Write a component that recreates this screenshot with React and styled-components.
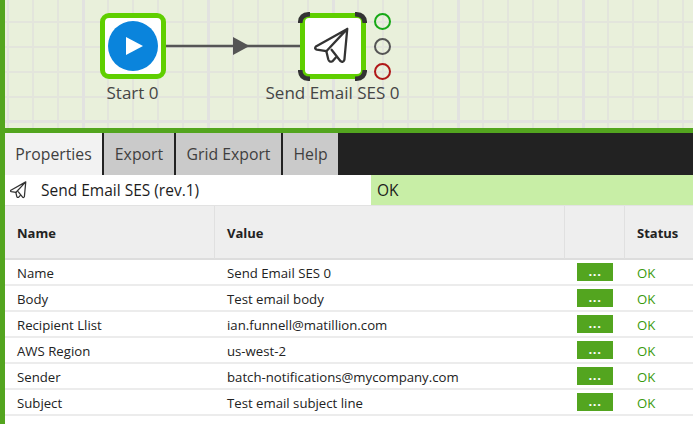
import React from "react";
import styled, { createGlobalStyle } from "styled-components";

const GREEN = "#53a51f";
const NODE_GREEN = "#5fcf00";

const GlobalStyle = createGlobalStyle`
  html, body {
    margin: 0;
    padding: 0;
    background: #fff;
  }
  body {
    font-family: "Open Sans", "Liberation Sans", sans-serif;
    overflow: hidden;
  }
`;

const Page = styled.div`
  width: 693px;
  height: 424px;
  box-sizing: border-box;
  border-left: 5px solid ${GREEN};
  display: flex;
  flex-direction: column;
  overflow: hidden;
`;

const Canvas = styled.div`
  position: relative;
  height: 128px;
  flex: none;
  background-color: #e9f0db;
  background-image:
    linear-gradient(#e2e2e0 3px, transparent 3px),
    linear-gradient(90deg, #e2e2e0 3px, transparent 3px),
    linear-gradient(#e3e5dc 2px, transparent 2px),
    linear-gradient(90deg, #e3e5dc 2px, transparent 2px);
  background-size: 125px 125px, 125px 125px, 25px 25px, 25px 25px;
  background-position: 0 -5px, -48px 0, 0 -4px, 2px 0;
`;

const Edge = styled.svg`
  position: absolute;
  left: 160px;
  top: 36px;
`;

const Node = styled.div`
  position: absolute;
  left: ${(p) => p.$x}px;
  top: 13px;
  width: 66px;
  height: 66px;
  box-sizing: border-box;
  border: 5px solid ${NODE_GREEN};
  border-radius: 9px;
  background: #fff;
  display: flex;
  align-items: center;
  justify-content: center;
`;

const PlayDisc = styled.div`
  width: 50px;
  height: 50px;
  border-radius: 50%;
  background: #0a84dc;
  display: flex;
  align-items: center;
  justify-content: center;
  svg {
    margin-left: 3px;
  }
`;

const Corners = styled.svg`
  position: absolute;
  left: -7px;
  top: -6px;
`;

const NodeLabel = styled.div`
  position: absolute;
  left: ${(p) => p.$x}px;
  top: 81px;
  width: 200px;
  margin-left: -100px;
  text-align: center;
  font-size: 17px;
  line-height: 23px;
  color: #454545;
`;

const Port = styled.div`
  position: absolute;
  left: 369px;
  top: ${(p) => p.$y}px;
  width: 13px;
  height: 13px;
  border: 2px solid ${(p) => p.$color};
  border-radius: 50%;
`;

const GreenBar = styled.div`
  height: 5px;
  flex: none;
  background: ${GREEN};
`;

const TabBar = styled.div`
  height: 42px;
  flex: none;
  display: flex;
  background: #222;
  gap: 2px;
`;

const Tab = styled.div`
  width: ${(p) => p.$w}px;
  display: flex;
  align-items: center;
  justify-content: center;
  font-size: 15.8px;
  color: #3f3f3f;
  background: ${(p) => (p.$active ? "#f2f2f2" : "#cacaca")};
`;

const TitleRow = styled.div`
  height: 31px;
  box-sizing: border-box;
  flex: none;
  display: grid;
  grid-template-columns: 366px 1fr;
  font-size: 15.5px;
  color: #1c1c1c;
  border-bottom: 1px solid #e2e2e2;
`;

const TitleCell = styled.div`
  display: flex;
  align-items: center;
  padding-left: 5px;
  gap: 13px;
`;

const StatusCell = styled.div`
  display: flex;
  align-items: center;
  padding-left: 6px;
  background: #c8eea6;
`;

const Table = styled.div`
  display: grid;
  grid-template-columns: 210px 350px 60px 1fr;
`;

const HeadCell = styled.div`
  height: 54px;
  box-sizing: border-box;
  display: flex;
  align-items: center;
  padding: 2px 0 0 12px;
  font-size: 13px;
  font-weight: 700;
  color: #222;
  background: #eee;
  border-bottom: 2px solid #ddd;
  border-right: 1px solid #e0e0e0;
  &:nth-of-type(4) {
    border-right: none;
  }
`;

const Cell = styled.div`
  height: 26px;
  box-sizing: border-box;
  display: flex;
  align-items: center;
  padding: 2px 0 0 12px;
  font-size: 13.2px;
  color: ${(p) => p.$color || "#222"};
  border-bottom: 2px solid #ececec;
`;

const ButtonCell = styled(Cell)`
  padding-top: 0;
`;

const DotsButton = styled.div`
  width: 36px;
  height: 18px;
  background: ${GREEN};
  color: #fff;
  font-size: 13px;
  font-weight: 700;
  letter-spacing: 0.6px;
  line-height: 17px;
  text-align: center;
`;

const PlaneSlot = styled.div`
  display: flex;
  margin-left: -1px;
`;

const rows = [
  ["Name", "Send Email SES 0"],
  ["Body", "Test email body"],
  ["Recipient Llist", "ian.funnell@matillion.com"],
  ["AWS Region", "us-west-2"],
  ["Sender", "batch-notifications@mycompany.com"],
  ["Subject", "Test email subject line"],
];

const Plane = ({ size, width }) => (
  <svg width={size} height={size} viewBox="0 0 40 40" fill="none" stroke="#333" strokeWidth={width} strokeLinejoin="round" strokeLinecap="round">
    <path d="M35 2 L2 20.5 Q0 23 3 23.8 L13 25.5 L35 2 L32 34.5 Q30.5 38 28 36 L18.5 24" />
    <path d="M13 25.5 L15 34 Q16 37.5 19.5 36 L23 32" />
  </svg>
);

const App = () => (
  <>
    <GlobalStyle />
    <Page>
      <Canvas>
        <Edge width="140" height="20">
          <line x1="0" y1="10" x2="136" y2="10" stroke="#555" strokeWidth="2.6" />
          <path d="M68 1 L84.5 10 L68 19 Z" fill="#555" />
        </Edge>
        <Node $x={95}>
          <PlayDisc>
            <svg width="17" height="18" viewBox="0 0 17 18">
              <path d="M0 0 L17 9 L0 18 Z" fill="#fff" />
            </svg>
          </PlayDisc>
        </Node>
        <NodeLabel $x={127.5}>Start 0</NodeLabel>
        <Node $x={295}>
          <Corners width="69" height="69" viewBox="0 0 69 69" fill="none" stroke="#333" strokeWidth="4.5">
            <path d="M2.2 11 Q2.2 2.2 12 2.2" />
            <path d="M57 2.2 Q66.8 2.2 66.8 11" />
            <path d="M2.2 58 Q2.2 66.8 12 66.8" />
            <path d="M57 66.8 Q66.8 66.8 66.8 58" />
          </Corners>
          <PlaneSlot>
            <Plane size={38} width={2.4} />
          </PlaneSlot>
        </Node>
        <NodeLabel $x={327.5}>Send Email SES 0</NodeLabel>
        <Port $y={13} $color="#17a817" />
        <Port $y={38} $color="#555" />
        <Port $y={63} $color="#b01818" />
      </Canvas>
      <GreenBar />
      <TabBar>
        <Tab $w={97} $active>Properties</Tab>
        <Tab $w={70}>Export</Tab>
        <Tab $w={105}>Grid Export</Tab>
        <Tab $w={55}>Help</Tab>
      </TabBar>
      <TitleRow>
        <TitleCell>
          <Plane size={18} width={2.8} />
          Send Email SES (rev.1)
        </TitleCell>
        <StatusCell>OK</StatusCell>
      </TitleRow>
      <Table>
        <HeadCell>Name</HeadCell>
        <HeadCell>Value</HeadCell>
        <HeadCell />
        <HeadCell>Status</HeadCell>
        {rows.map(([name, value]) => (
          <React.Fragment key={name}>
            <Cell>{name}</Cell>
            <Cell>{value}</Cell>
            <ButtonCell>
              <DotsButton>...</DotsButton>
            </ButtonCell>
            <Cell $color="#3a9a0c">OK</Cell>
          </React.Fragment>
        ))}
      </Table>
    </Page>
  </>
);

export default App;
